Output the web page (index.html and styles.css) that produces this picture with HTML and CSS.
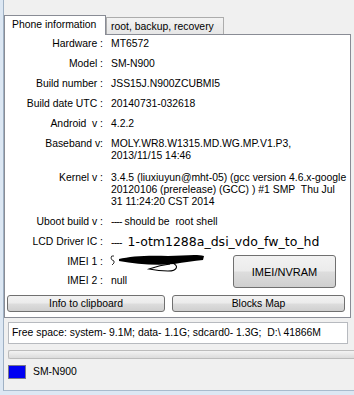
FILE: index.html
```html
<!DOCTYPE html>
<html lang="en">
<head>
  <meta charset="UTF-8" />
  <title>Phone information</title>
  <link rel="stylesheet" href="styles.css">
</head>
<body>
  <div class="window">
    <div class="tabs">
      <div class="tab active">Phone information</div>
      <div class="tab">root, backup, recovery</div>
    </div>

    <div class="page">
      <div class="fields">
        <div class="row"><span class="key">Hardware :</span><span class="val">MT6572</span></div>
        <div class="row"><span class="key">Model :</span><span class="val">SM-N900</span></div>
        <div class="row"><span class="key">Build number :</span><span class="val">JSS15J.N900ZCUBMI5</span></div>
        <div class="row"><span class="key">Build date UTC :</span><span class="val">20140731-032618</span></div>
        <div class="row"><span class="key">Android&nbsp; v :</span><span class="val">4.2.2</span></div>
        <div class="row"><span class="key">Baseband v:</span><span class="val">MOLY.WR8.W1315.MD.WG.MP.V1.P3,<br>2013/11/15 14:46</span></div>
        <div class="row kernel"><span class="key">Kernel v :</span><span class="val">3.4.5 (liuxiuyun@mht-05) (gcc version 4.6.x-google<br>20120106 (prerelease) (GCC) ) #1 SMP&nbsp; Thu Jul<br>31 11:24:20 CST 2014</span></div>
        <div class="row"><span class="key">Uboot build v :</span><span class="val"><span class="dash">----</span> should be&nbsp; root shell</span></div>
        <div class="row lcd"><span class="key">LCD Driver IC :</span><span class="val"><span class="dash">----</span> <span class="chip">1-otm1288a_dsi_vdo_fw_to_hd</span></span></div>

        <div class="imei">
          <div class="imei-rows">
            <div class="row">
              <span class="key">IMEI 1 :</span>
              <span class="val">
                <!-- hand-drawn redaction over the number -->
                <svg class="scribble" width="100" height="26" viewBox="0 0 100 26">
                  <path d="M4 7 Q1 6 1 9 Q1 11 4 12 Q5 14 2 16" fill="none" stroke="#333" stroke-width="1"/>
                  <path d="M9 10 C20 7 40 6 58 7 C72 7 86 5 94 7 L93 11 C84 12 74 13 64 15 C46 17 26 15 9 12 Z" fill="#000"/>
                  <path d="M62 14 C69 16 68 22 58 22 C50 22 44 21 39 20 C45 18 52 16 60 15" fill="none" stroke="#000" stroke-width="1.1"/>
                </svg>
              </span>
            </div>
            <div class="row"><span class="key">IMEI 2 :</span><span class="val">null</span></div>
          </div>
          <button class="btn big">IMEI/NVRAM</button>
        </div>
      </div>

      <div class="actions">
        <button class="btn clip">Info to clipboard</button>
        <button class="btn blocks">Blocks Map</button>
      </div>
    </div>

    <div class="freespace">Free space: system- 9.1M; data- 1.1G; sdcard0- 1.3G;&nbsp; D:\ 41866M</div>
    <div class="progress"></div>
    <div class="status"><span class="swatch"></span>SM-N900</div>
  </div>
</body>
</html>
```

FILE: styles.css
```css
html, body {
  margin: 0;
  background: #dce7f3;
}
body {
  width: 354px;
  height: 395px;
  overflow: hidden;
  font-family: "Liberation Sans", Arial, sans-serif;
  font-size: 10.4px;
  color: #000;
}
.window {
  box-sizing: border-box;
  margin-left: 3px;
  width: 351px;
  height: 391px;
  background: #f0f0f0;
  border-left: 1px solid #9fb1c4;
  border-bottom: 1px solid #a9bbcd;
}

/* tab strip */
.tabs {
  display: flex;
  align-items: flex-end;
  height: 34px;
}
.tab {
  box-sizing: border-box;
  height: 17px;
  line-height: 14px;
  padding: 2px 0 0 4px;
  width: 118px;
  border: 1px solid #acacac;
  border-bottom: none;
  background: linear-gradient(#f3f3f3, #e6e6e6);
  white-space: nowrap;
}
.tab.active {
  position: relative;
  z-index: 1;
  width: 102px;
  height: 20px;
  margin-bottom: -1px;
  line-height: 18px;
  padding: 0 0 0 7px;
  background: #fff;
  border-color: #898c95;
}

/* tab page */
.page {
  box-sizing: border-box;
  width: 347px;
  height: 284px;
  background: #fff;
  border: 1px solid #898c95;
  padding: 3px 0 5px 0;
  display: flex;
  flex-direction: column;
}
.fields {
  display: flex;
  flex-direction: column;
  gap: 8px;
}
.row {
  display: flex;
  line-height: 12px;
  white-space: nowrap;
}
.key {
  width: 98px;
  flex: none;
  text-align: right;
}
.val {
  margin-left: 8px;
}
.kernel {
  margin-top: 2px;
}
.dash {
  letter-spacing: -0.8px;
}
.lcd {
  line-height: 14px;
  margin-top: -1px;
}
.chip {
  font-family: "DejaVu Sans", Verdana, sans-serif;
  font-size: 12.5px;
  margin-left: 3px;
}
.scribble {
  display: block;
  margin: -7px 0 -7px -1px;
}

.imei {
  display: flex;
  align-items: center;
  margin-top: -3px;
}
.imei-rows {
  display: flex;
  flex-direction: column;
  gap: 7px;
}
.btn {
  font-family: inherit;
  font-size: 10.4px;
  color: #000;
  padding: 0;
  border: 1px solid #707070;
  border-radius: 3px;
  background: linear-gradient(#f2f2f2 0%, #ebebeb 48%, #dddddd 52%, #cfcfcf 100%);
}
.btn.big {
  margin-left: auto;
  margin-right: 14px;
  width: 103px;
  height: 33px;
  font-size: 11px;
}

.actions {
  margin-top: auto;
  display: flex;
  gap: 7px;
  padding-left: 2px;
}
.btn.clip {
  width: 158px;
  height: 17px;
}
.btn.blocks {
  width: 173px;
  height: 17px;
}

/* below the tab control */
.freespace {
  box-sizing: border-box;
  margin: 4px 0 0 4px;
  width: 340px;
  height: 22px;
  line-height: 20px;
  padding-left: 3px;
  background: #fff;
  border: 1px solid #b7babf;
  white-space: nowrap;
}
.progress {
  box-sizing: border-box;
  margin: 6px 0 0 4px;
  height: 9px;
  border: 1px solid #bcbcbc;
  border-right: none;
  border-radius: 2px 0 0 2px;
  background: linear-gradient(#f3f3f3, #dcdcdc);
}
.status {
  display: flex;
  align-items: center;
  margin: 6px 0 0 4px;
  line-height: 14px;
}
.swatch {
  box-sizing: border-box;
  width: 18px;
  height: 14px;
  margin-right: 7px;
  background: #0000f2;
  border: 1px solid #7a7a8a;
}
```
